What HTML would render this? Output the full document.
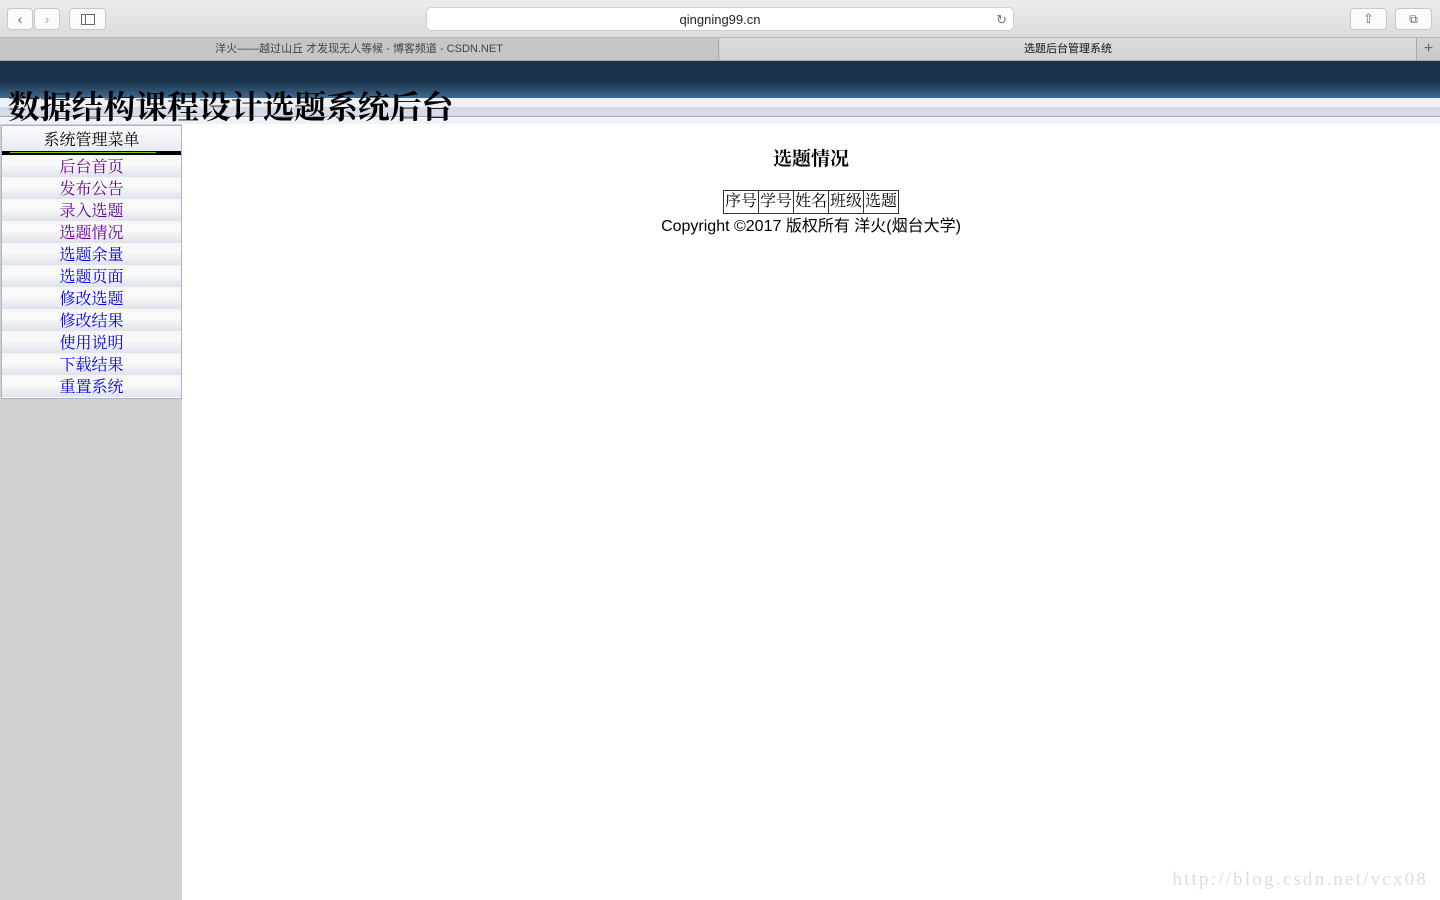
<!DOCTYPE html>
<html><head><meta charset="utf-8"><style>
*{margin:0;padding:0;box-sizing:border-box}
body{width:1440px;height:900px;overflow:hidden;background:#fff;font-family:"Liberation Serif","Noto Serif CJK SC",serif;position:relative}
.chrome{position:absolute;left:0;top:0;width:1440px;height:38px;background:linear-gradient(#ececec,#dcdcdc);border-bottom:1px solid #b8b8b8}
.btn{position:absolute;top:8px;height:22px;background:#fbfbfb;border:1px solid #c8c8c8;border-radius:4px}
.url{position:absolute;left:426px;top:7px;width:588px;height:24px;background:#fff;border:1px solid #d0d0d0;border-radius:5px;font:13px "Liberation Sans","Noto Sans CJK SC",sans-serif;text-align:center;line-height:23px;color:#222}
.tabs{position:absolute;left:0;top:38px;width:1440px;height:23px;background:linear-gradient(#d4d4d4,#c8c8c8);border-bottom:1px solid #a8a8a8;font:11px "Liberation Sans","Noto Sans CJK SC",sans-serif;color:#444}
.tab{position:absolute;top:0;height:22px;line-height:22px;text-align:center}
.banner{position:absolute;left:0;top:61px;width:1440px;height:37px;background:linear-gradient(#19324a 0,#19324a 55%,#3e6a90 100%)}
.b2{position:absolute;left:0;top:98px;width:1440px;height:9px;background:#eef0f3}
.b3{position:absolute;left:0;top:107px;width:1440px;height:10px;background:#d5dce7;border-bottom:1px solid #98a6b8}
.b4{position:absolute;left:0;top:118px;width:1440px;height:6px;background:#eef2fa}
h1{position:absolute;left:8px;top:82px;font-size:32px;font-weight:bold;color:#000;white-space:nowrap;letter-spacing:-0.2px}
.side{position:absolute;left:0;top:124px;width:182px;height:776px;background:#d0d0d0}
.menu{position:absolute;left:1px;top:125px;width:181px;height:274px;border:1px solid #a8b4c4;background:#fff}
.mh{height:25px;text-align:center;font-size:16px;line-height:30px;background:linear-gradient(#fafafa,#e8ecf2)}
.bar{height:4px;background:#000;position:relative}
.bar:after{content:"";position:absolute;left:8px;right:25px;top:1px;height:1px;background:#7ad000}
.mi{height:22px;text-align:center;font-size:16px;line-height:26px;background:linear-gradient(#f6f6f8 0,#fafafa 40%,#dfe3ea 100%)}
.mi.v{color:#660099}.mi.b{color:#0000ee}
.main{position:absolute;left:182px;top:124px;width:1258px;text-align:center}
h2{font-size:19px;font-weight:bold;margin-top:22px;line-height:28px}
table{border:1px solid #333;border-collapse:collapse;margin:16px auto 0;font-size:16px}
td{border:1px solid #333;padding:0 1px;line-height:22px}
.copy{font:16px "Liberation Sans","Noto Sans CJK SC",sans-serif;margin-top:3px;line-height:20px}
.wm{position:absolute;right:12px;bottom:9px;font:19px "Liberation Serif",serif;color:#ddd;letter-spacing:2.2px}
</style></head><body>
<div class="chrome">
<div class="btn" style="left:7px;width:26px;text-align:center;font:14px sans-serif;color:#666;line-height:20px">‹</div>
<div class="btn" style="left:34px;width:26px;text-align:center;font:14px sans-serif;color:#aaa;line-height:20px">›</div>
<div class="btn" style="left:69px;width:37px"><div style="position:absolute;left:11px;top:5px;width:14px;height:11px;border:1px solid #666"><div style="width:4px;height:100%;border-right:1px solid #666"></div></div></div>
<div class="url">qingning99.cn<span style="position:absolute;right:6px;color:#777">↻</span></div>
<div class="btn" style="left:1350px;width:37px;text-align:center;color:#666;font:13px sans-serif;line-height:20px">⇧</div>
<div class="btn" style="left:1395px;width:37px;text-align:center;color:#666;font:12px sans-serif;line-height:20px">⧉</div>
</div>
<div class="tabs">
<div class="tab" style="left:0;width:719px;border-right:1px solid #a8a8a8;background:#c6c6c6">洋火——越过山丘 才发现无人等候 - 博客频道 - CSDN.NET</div>
<div class="tab" style="left:720px;width:696px;background:linear-gradient(#dcdcdc,#d2d2d2);color:#111">选题后台管理系统</div>
<div class="tab" style="left:1416px;width:24px;border-left:1px solid #a8a8a8;font-size:16px;color:#666">+</div>
</div>
<div class="banner"></div><div class="b2"></div><div class="b3"></div><div class="b4"></div>
<h1>数据结构课程设计选题系统后台</h1>
<div class="side"></div>
<div class="menu">
<div class="mh">系统管理菜单</div><div class="bar"></div>
<div class="mi v">后台首页</div><div class="mi v">发布公告</div><div class="mi v">录入选题</div><div class="mi v">选题情况</div>
<div class="mi b">选题余量</div><div class="mi b">选题页面</div><div class="mi b">修改选题</div><div class="mi b">修改结果</div>
<div class="mi b">使用说明</div><div class="mi b">下载结果</div><div class="mi b">重置系统</div>
</div>
<div class="main">
<h2>选题情况</h2>
<table><tr><td>序号</td><td>学号</td><td>姓名</td><td>班级</td><td>选题</td></tr></table>
<div class="copy">Copyright ©2017 版权所有 洋火(烟台大学)</div>
</div>
<div class="wm">http://blog.csdn.net/vcx08</div>
</body></html>
